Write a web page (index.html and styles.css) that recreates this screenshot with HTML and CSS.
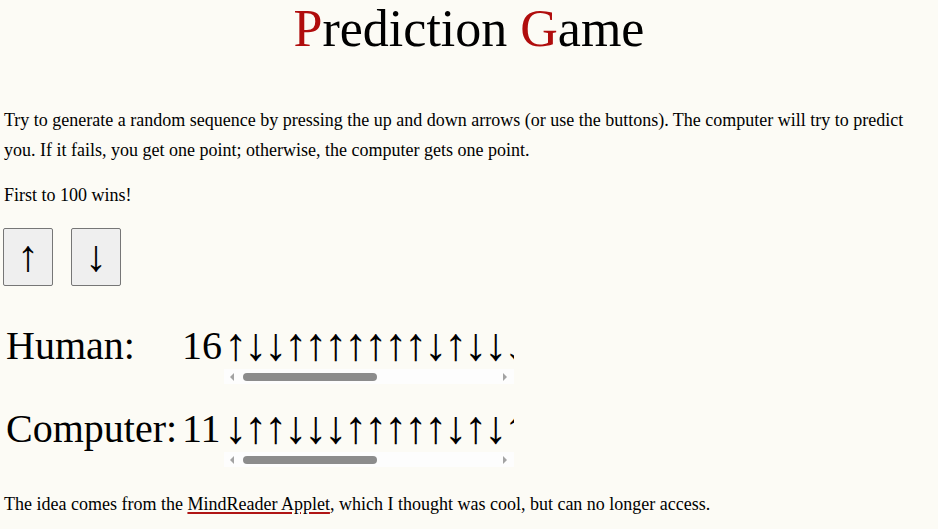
FILE: index.html
```html
<!DOCTYPE html>
<html>
<head>
<meta charset="utf-8">
<title>Prediction Game</title>
<link rel="stylesheet" href="styles.css">
</head>
<body>
<h1 class="title"><span class="red">P</span>rediction <span class="red">G</span>ame</h1>
<p class="text">Try to generate a random sequence by pressing the up and down arrows (or use the buttons). The computer will try to predict you. If it fails, you get one point; otherwise, the computer gets one point.</p>
<p class="text">First to 100 wins!</p>
<div class="controls">
  <button class="btn">↑</button>
  <button class="btn">↓</button>
</div>
<div class="scores">
  <div class="label">Human:</div>
  <div class="num">16</div>
  <div class="seq">
    <div class="arrows">↑↓↓↑↑↑↑↑↑↑↓↑↓↓↓↑↓↑↑↓↓↑↑↓↑↓↑</div>
    <div class="bar"><span class="tri left"></span><span class="track"><span class="thumb"></span></span><span class="tri right"></span></div>
  </div>
  <div class="label">Computer:</div>
  <div class="num">11</div>
  <div class="seq">
    <div class="arrows">↓↑↑↓↓↓↑↑↑↑↑↓↑↓↑↓↑↓↑↑↓↑↓↓↑↑↓</div>
    <div class="bar"><span class="tri left"></span><span class="track"><span class="thumb"></span></span><span class="tri right"></span></div>
  </div>
</div>
<p class="text footer">The idea comes from the <a class="link" href="#">MindReader Applet</a>, which I thought was cool, but can no longer access.</p>
</body>
</html>
```

FILE: styles.css
```css
html, body {
  background: #fcfbf5;
}
body {
  margin: 0;
  padding: 0 4px;
  font-family: "Liberation Serif", "Times New Roman", serif;
  color: #000;
}
.title {
  margin: 0 0 15px;
  height: 90px;
  text-align: center;
  font-weight: normal;
  font-size: 52px;
  line-height: 58px;
}
.red {
  color: #b00d0d;
}
.text {
  font-size: 18px;
  line-height: 30px;
  margin: 15px 0;
}
.controls {
  display: flex;
  gap: 18px;
  margin-top: 18px;
  margin-left: -1px;
}
.btn {
  width: 50px;
  height: 58px;
  padding: 0;
  font-family: "Liberation Serif", serif;
  font-size: 44px;
  line-height: 46px;
  background: #efefef;
  border: 1px solid #767676;
  border-radius: 2px;
  color: #000;
}
.scores {
  display: grid;
  grid-template-columns: 176px 40px 292px;
  row-gap: 22px;
  margin-top: 37px;
  align-items: start;
  font-size: 40px;
  line-height: 46px;
}
.label,
.num {
  padding-left: 2px;
}
.seq {
  margin-left: 4px;
  width: 290px;
}
.arrows {
  overflow: hidden;
  white-space: nowrap;
  font-size: 46px;
  letter-spacing: -3px;
  height: 46px;
  line-height: 44px;
}
.bar {
  display: flex;
  align-items: center;
  height: 15px;
  background: #fdfdfd;
}
.track {
  flex: 1;
  height: 8px;
  padding: 0 2px 0 4px;
}
.thumb {
  display: block;
  width: 134px;
  height: 8px;
  border-radius: 4px;
  background: #8c8c8c;
}
.tri {
  width: 0;
  height: 0;
  border-top: 4px solid transparent;
  border-bottom: 4px solid transparent;
}
.tri.left {
  margin: 0 5px 0 6px;
  border-right: 4px solid #a3a3a3;
}
.tri.right {
  margin: 0 7px 0 5px;
  border-left: 4px solid #a3a3a3;
}
.footer {
  margin-top: 22px;
}
.link {
  color: #000;
  text-decoration: underline;
  text-decoration-color: #b01515;
  text-decoration-thickness: 2px;
  text-underline-offset: 2px;
}
```
